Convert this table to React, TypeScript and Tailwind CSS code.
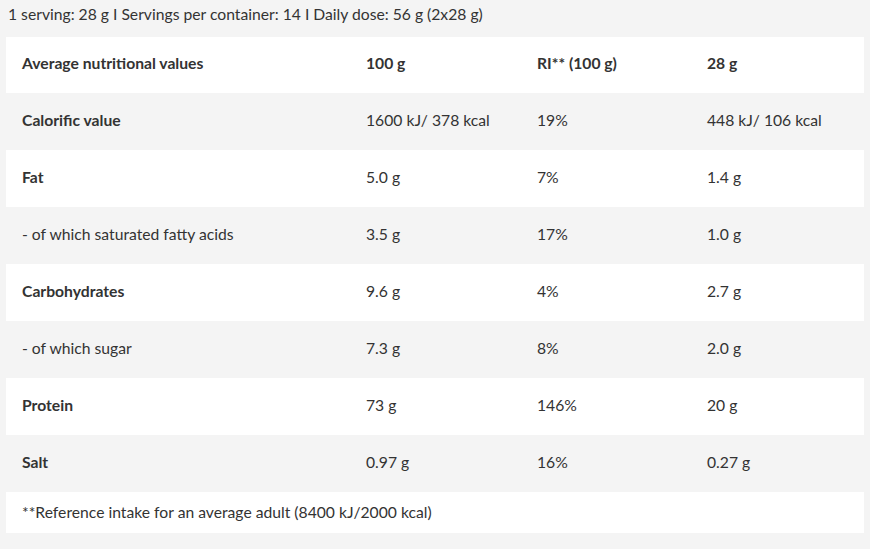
export default function App() {
  const rows = [
    { name: "Calorific value", bold: true, a: "1600 kJ/ 378 kcal", ri: "19%", b: "448 kJ/ 106 kcal" },
    { name: "Fat", bold: true, a: "5.0 g", ri: "7%", b: "1.4 g" },
    { name: "- of which saturated fatty acids", bold: false, a: "3.5 g", ri: "17%", b: "1.0 g" },
    { name: "Carbohydrates", bold: true, a: "9.6 g", ri: "4%", b: "2.7 g" },
    { name: "- of which sugar", bold: false, a: "7.3 g", ri: "8%", b: "2.0 g" },
    { name: "Protein", bold: true, a: "73 g", ri: "146%", b: "20 g" },
    { name: "Salt", bold: true, a: "0.97 g", ri: "16%", b: "0.27 g" },
  ]

  return (
    <div
      className="min-h-[549px] w-[870px] bg-[#f4f4f4] text-[15.7px] text-[#333333]"
      style={{ fontFamily: "Lato, 'Open Sans', sans-serif" }}
    >
      <p className="px-[8px] pt-[4px] h-[37px] leading-[20px]">
        1 serving: 28 g I Servings per container: 14 I Daily dose: 56 g (2x28 g)
      </p>

      <div className="mx-[6px] w-[858px]">
        <div className="grid h-[56px] grid-cols-[344px_171px_170px_1fr] items-center bg-white px-4 pb-[2px] font-bold">
          <div>Average nutritional values</div>
          <div>100 g</div>
          <div>RI** (100 g)</div>
          <div>28 g</div>
        </div>

        {rows.map((r, i) => (
          <div
            key={r.name}
            className={`grid h-[57px] grid-cols-[344px_171px_170px_1fr] items-center px-4 pb-[1px] ${
              i % 2 === 0 ? "bg-[#f4f4f4]" : "bg-white"
            }`}
          >
            <div className={r.bold ? "font-bold" : ""}>{r.name}</div>
            <div>{r.a}</div>
            <div>{r.ri}</div>
            <div>{r.b}</div>
          </div>
        ))}

        <div className="flex h-[41px] items-center bg-white px-4">
          **Reference intake for an average adult (8400 kJ/2000 kcal)
        </div>
      </div>
    </div>
  )
}
